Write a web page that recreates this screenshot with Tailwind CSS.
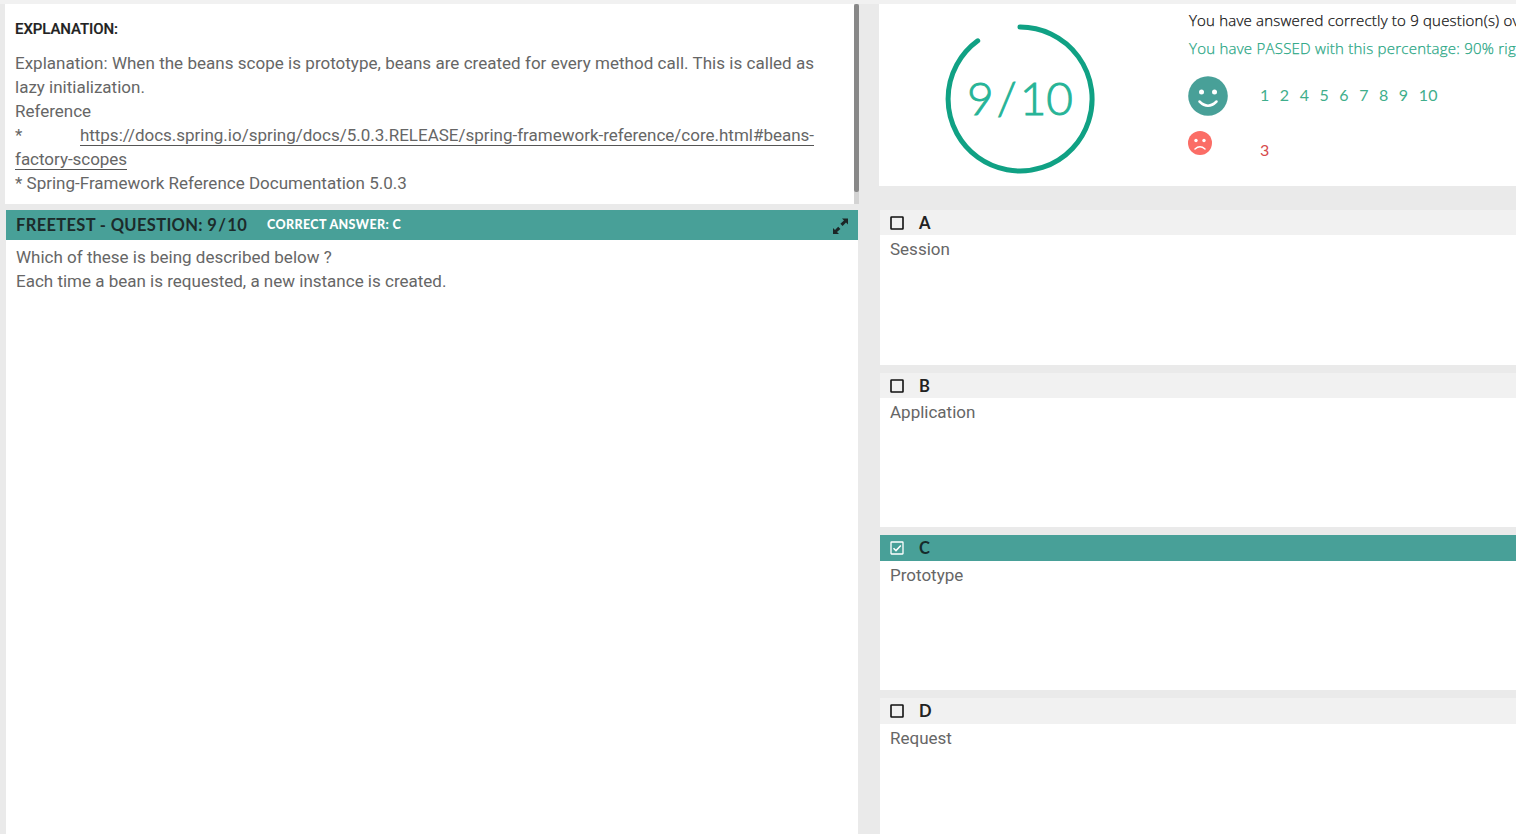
<!DOCTYPE html>
<html lang="en">
<head>
<meta charset="utf-8">
<title>Test results</title>
<script src="https://cdn.jsdelivr.net/npm/@tailwindcss/browser@4"></script>
</head>
<body class="h-[834px] overflow-hidden bg-[#eaeaea] font-['Roboto',sans-serif] text-[17px] leading-6 text-[#666]">
<div class="h-1 bg-[#f1f1f1]"></div>
<div class="flex h-[830px] w-[1516px] overflow-hidden">
  <main class="ml-[5px] flex w-[854px] shrink-0 flex-col">
    <section class="flex h-[200px] shrink-0 bg-white">
      <div class="w-[849px] pl-2.5 pt-[13px]">
        <h2 class="text-[15px] font-medium tracking-[-0.08px] text-[#222] [-webkit-text-stroke:0.2px_#222]">EXPLANATION:</h2>
        <div class="mt-[10px] w-[799px]">
          <p class="h-6 whitespace-nowrap [text-align-last:justify]">Explanation: When the beans scope is prototype, beans are created for every method call. This is called as</p>
          <p class="h-6">lazy initialization.</p>
          <p class="h-6">Reference</p>
          <p class="flex h-6 justify-between whitespace-nowrap"><span>*</span><a class="h-[23px] border-b border-[#555] tracking-[-0.01px]">https://docs.spring.io/spring/docs/5.0.3.RELEASE/spring-framework-reference/core.html#beans-</a></p>
          <p class="flex h-6"><a class="h-[23px] border-b border-[#555] tracking-[-0.03px]">factory-scopes</a></p>
          <p class="h-6">* Spring-Framework Reference Documentation 5.0.3</p>
        </div>
      </div>
      <div class="w-[5px] bg-[#d3d3d3]"><div class="h-[188px] rounded-[2px] bg-[#888]"></div></div>
    </section>
    <section class="ml-px mt-1.5 w-[852px] grow bg-white">
      <header class="flex h-[30px] items-center bg-[#48a098] pl-2.5 pr-[9px] font-['Lato',sans-serif]">
        <h1 class="w-[251px] whitespace-nowrap text-[16.5px] font-bold tracking-[0.34px] text-[#1c2b2b]">FREETEST - QUESTION: 9<span class="mx-px">/</span>10</h1>
        <span class="whitespace-nowrap font-['Lato',sans-serif] text-[12.5px] font-black tracking-[0.38px] text-white">CORRECT ANSWER: C</span>
        <svg class="ml-auto mt-[2px]" width="17" height="17" viewBox="0 0 17 17" fill="#1c2626"><path d="M10 0.500h6v6l-2-2-3.400 3.400-2.200-2.200L12 2.500zM7 16H1v-6l2 2L6.200 8.800l2.200 2.200L5 14z"/></svg>
      </header>
      <div class="whitespace-nowrap pl-2.5 pt-[5px]">
        <p>Which of these is being described below ?</p>
        <p>Each time a bean is requested, a new instance is created.</p>
      </div>
    </section>
  </main>
  <aside class="ml-5 flex w-[637px] shrink-0 flex-col">
    <section class="flex h-[182px] shrink-0 overflow-hidden bg-white">
      <div class="ml-[66px] mt-5 grid size-[150px] shrink-0 place-items-center">
        <svg class="col-start-1 row-start-1" width="150" height="150" viewBox="0 0 150 150" fill="none" stroke="#10a184" stroke-width="5" stroke-linecap="round"><path d="M75 3a72 72 0 1 1-42.300 13.800"/></svg>
        <span class="col-start-1 row-start-1 pb-[3px] font-['Lato',sans-serif] text-[46px] font-light text-[#26b497] [-webkit-text-stroke:0.9px_#26b497]">9<span class="mx-[3px] inline-block">/</span>10</span>
      </div>
      <div class="ml-[94px] whitespace-nowrap pt-1 font-['Open_Sans',sans-serif] text-[15px] font-light">
        <p class="tracking-[0.2px] text-[#111] [-webkit-text-stroke:0.25px_#111]">You have answered correctly to 9 question(s) over 10</p>
        <p class="mt-1 tracking-[0.24px] text-[#28a684] [-webkit-text-stroke:0.25px_#28a684]">You have PASSED with this percentage: 90% right</p>
        <div class="-ml-px mt-4 flex h-10 items-center">
          <svg width="40" height="40" viewBox="0 0 40 40"><circle cx="20" cy="20" r="19.800" fill="#48a098"/><circle cx="13.500" cy="16" r="2.500" fill="#fff"/><circle cx="26.500" cy="16" r="2.500" fill="#fff"/><path d="M11.500 25.500Q20 34 28.500 25.500" fill="none" stroke="#fff" stroke-width="2.500" stroke-linecap="round"/></svg>
          <div class="-mt-0.5 ml-8 flex gap-[10.3px] font-['Lato',sans-serif] text-[16px] font-normal tracking-[0.25px] text-[#3fae8c]"><span>1</span><span>2</span><span>4</span><span>5</span><span>6</span><span>7</span><span>8</span><span>9</span><span>10</span></div>
        </div>
        <div class="-ml-px mt-[14px] flex h-[26px]">
          <svg class="mt-px" width="24" height="24" viewBox="0 0 24 24"><circle cx="12" cy="12" r="12" fill="#fb6d66"/><circle cx="8" cy="9.500" r="1.700" fill="#fff"/><circle cx="16" cy="9.500" r="1.700" fill="#fff"/><path d="M7 18Q12 13.500 17 18" fill="none" stroke="#fff" stroke-width="1.500" stroke-linecap="round"/></svg>
          <span class="ml-12 mt-2 font-['Lato',sans-serif] text-[16px] font-normal text-[#d64b4b]">3</span>
        </div>
      </div>
    </section>
    <section class="ml-px mt-6 h-[155px] shrink-0 bg-white">
      <header class="flex h-[25px] items-center gap-[15px] bg-[#f1f1f1] pl-2.5 font-['Lato',sans-serif] text-[16.5px] font-bold text-[#222]"><svg width="14" height="14" viewBox="0 0 14 14"><rect x="1" y="1" width="12" height="12" rx=".5" fill="none" stroke="#111" stroke-width="1.600"/></svg><span>A</span></header>
      <p class="pl-2.5 pt-0.5">Session</p>
    </section>
    <section class="ml-px mt-2 h-[154px] shrink-0 bg-white">
      <header class="flex h-[25px] items-center gap-[15px] bg-[#f1f1f1] pl-2.5 font-['Lato',sans-serif] text-[16.5px] font-bold text-[#222]"><svg width="14" height="14" viewBox="0 0 14 14"><rect x="1" y="1" width="12" height="12" rx=".5" fill="none" stroke="#111" stroke-width="1.600"/></svg><span>B</span></header>
      <p class="pl-2.5 pt-0.5">Application</p>
    </section>
    <section class="ml-px mt-2 h-[155px] shrink-0 bg-white">
      <header class="flex h-[26px] items-center gap-[15px] bg-[#48a098] pl-2.5 font-['Lato',sans-serif] text-[16.5px] font-bold text-[#162b2b]"><svg width="14" height="14" viewBox="0 0 14 14" fill="none" stroke="#fff"><rect x="1" y="1" width="12" height="12" rx=".5" stroke-width="1.300"/><path d="M3.500 7.200 6 9.600l4.800-5" stroke-width="1.500"/></svg><span class="-mt-px">C</span></header>
      <p class="pl-2.5 pt-0.5">Prototype</p>
    </section>
    <section class="ml-px mt-2 h-[155px] shrink-0 bg-white">
      <header class="flex h-[26px] items-center gap-[15px] bg-[#f1f1f1] pl-2.5 font-['Lato',sans-serif] text-[16.5px] font-bold text-[#222]"><svg width="14" height="14" viewBox="0 0 14 14"><rect x="1" y="1" width="12" height="12" rx=".5" fill="none" stroke="#111" stroke-width="1.600"/></svg><span class="-mt-px">D</span></header>
      <p class="pl-2.5 pt-0.5">Request</p>
    </section>
  </aside>
</div>
</body>
</html>
